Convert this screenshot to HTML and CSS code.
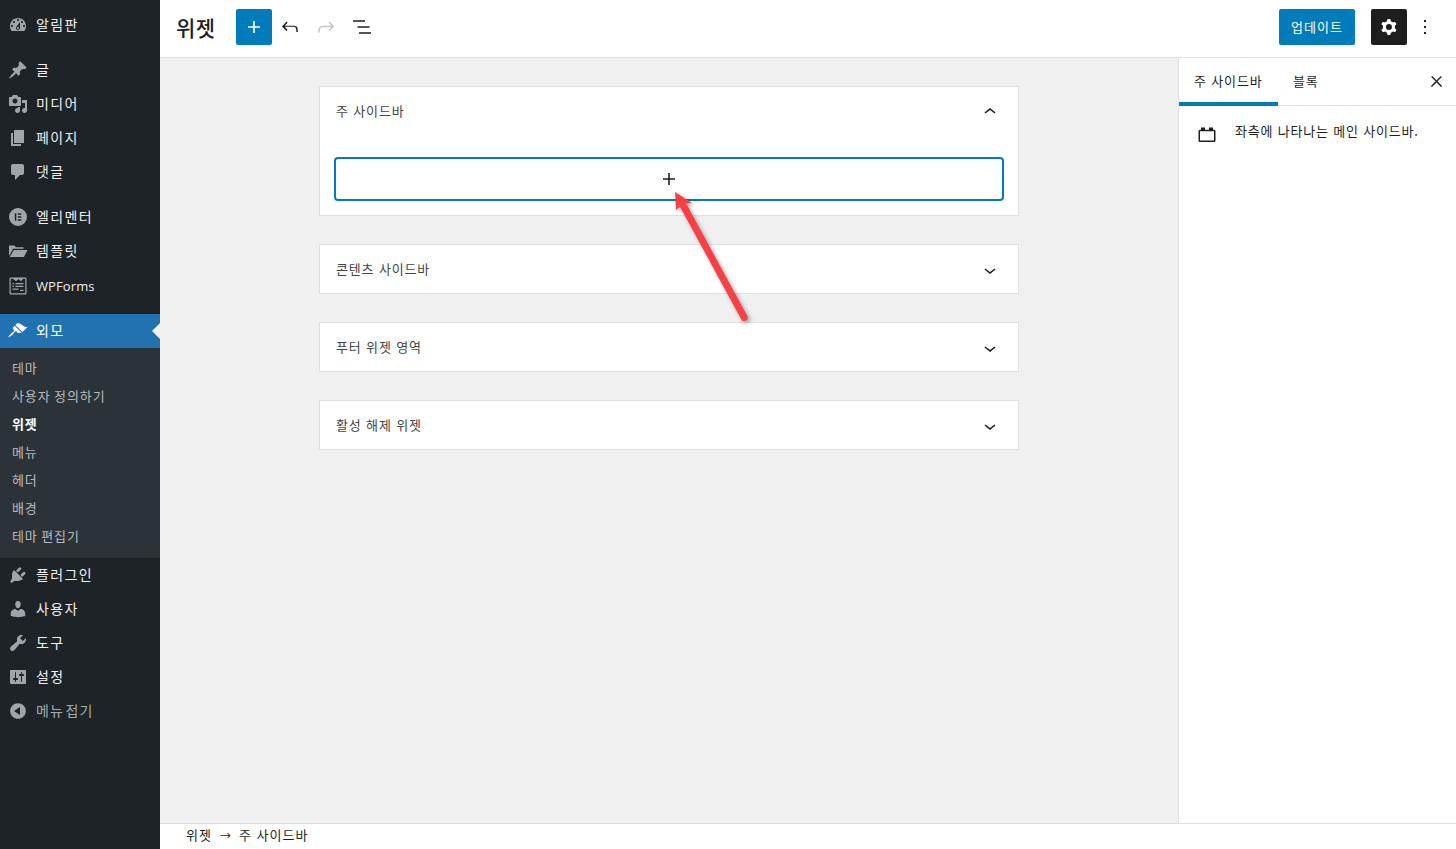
FILE: index.html
```html
<!DOCTYPE html>
<html lang="ko">
<head>
<meta charset="utf-8">
<title>위젯</title>
<link rel="stylesheet" href="styles.css">
</head>
<body>
<div class="app">
  <nav class="adminmenu">
    <a class="mi"><svg class="mi-ic" viewBox="0 0 20 20"><path d="M3.760 16h12.480c1.100-1.370 1.760-3.110 1.760-5 0-4.420-3.580-8-8-8s-8 3.580-8 8c0 1.890.66 3.630 1.760 5zM10 4c.55 0 1 .45 1 1s-.45 1-1 1-1-.45-1-1 .45-1 1-1zM6 6c.55 0 1 .45 1 1s-.45 1-1 1-1-.45-1-1 .45-1 1-1zm8 0c.55 0 1 .45 1 1s-.45 1-1 1-1-.45-1-1 .45-1 1-1zm-5.370 5.550L12 7v6c0 1.100-.9 2-2 2s-2-.9-2-2c0-.57.24-1.080.63-1.450zM4 10c.55 0 1 .45 1 1s-.45 1-1 1-1-.45-1-1 .45-1 1-1zm12 0c.55 0 1 .45 1 1s-.45 1-1 1-1-.45-1-1 .45-1 1-1zm-5 3c0-.55-.45-1-1-1s-1 .45-1 1 .45 1 1 1 1-.45 1-1z"/></svg><span>알림판</span></a>
    <a class="mi sep"><svg class="mi-ic" viewBox="0 0 20 20"><path d="M10.440 3.020l1.820-1.820 6.360 6.350-1.830 1.820c-1.050-.68-2.480-.57-3.410.36l-.75.75c-.92.93-1.040 2.350-.35 3.410l-1.830 1.820-2.410-2.410-2.800 2.790c-.42.42-3.380 2.710-3.800 2.290s1.860-3.390 2.280-3.810l2.790-2.790L4.100 9.360l1.830-1.820c1.050.69 2.480.57 3.400-.36l.75-.75c.93-.92 1.050-2.350.36-3.410z"/></svg><span>글</span></a>
    <a class="mi"><svg class="mi-ic" viewBox="0 0 20 20"><path d="M13 11V4c0-.55-.45-1-1-1h-1.670L9 1H5L3.670 3H2c-.55 0-1 .45-1 1v7c0 .55.45 1 1 1h10c.55 0 1-.45 1-1zM7 4.500c1.380 0 2.500 1.120 2.500 2.500S8.380 9.500 7 9.500 4.500 8.380 4.500 7 5.620 4.500 7 4.500zM14 6h5v10.500c0 1.380-1.120 2.500-2.500 2.500S14 17.880 14 16.500s1.120-2.500 2.500-2.500c.17 0 .34.02.5.050V9h-3V6zm-4 8.050V13h2v3.500c0 1.380-1.120 2.500-2.500 2.500S7 17.880 7 16.500 8.120 14 9.500 14c.17 0 .34.02.5.050z"/></svg><span>미디어</span></a>
    <a class="mi"><svg class="mi-ic" viewBox="0 0 20 20"><path d="M6 15V2h10v13H6zm-1 1h8v2H3V5h2v11z"/></svg><span>페이지</span></a>
    <a class="mi"><svg class="mi-ic" viewBox="0 0 20 20"><path d="M5 2h9c1.100 0 2 .9 2 2v7c0 1.100-.9 2-2 2h-2l-5 5v-5H5c-1.100 0-2-.9-2-2V4c0-1.100.9-2 2-2z"/></svg><span>댓글</span></a>
    <a class="mi sep"><svg class="mi-ic" viewBox="0 0 20 20"><path fill-rule="evenodd" d="M10 1a9 9 0 1 1 0 18 9 9 0 0 1 0-18zM6.800 6.200v7.600h1.500V6.200zm3 0v1.500h3.500V6.200zm0 3v1.500h3.500V9.200zm0 3.100v1.500h3.500v-1.500z"/></svg><span>엘리멘터</span></a>
    <a class="mi"><svg class="mi-ic" viewBox="0 0 20 20"><path d="M1 4.500h5.500l1.500 1.700h7.500v1.600H5L1.600 14.500 1 14z"/><path d="M5.800 9H19.500l-3.600 7H1.800z"/></svg><span>템플릿</span></a>
    <a class="mi wp"><svg class="mi-ic" viewBox="0 0 20 20"><path fill-rule="evenodd" d="M2.500 1.500h15a1 1 0 0 1 1 1v15a1 1 0 0 1-1 1h-15a1 1 0 0 1-1-1v-15a1 1 0 0 1 1-1zm.2 1.200v14.600h14.600V2.700h-2.200L13 5.200 10.500 3 8 5.200 5 2.700zM4.500 7h1.600v1.300H4.500zm3 0h8v1.300h-8zm-3 2.700h1.600V11H4.500zm3 0h8V11h-8zm-3 2.700h6v1.300h-6zm7.500 1.300h3.500V15H12z"/></svg><span class="latin">WPForms</span></a>
    <div class="group sep">
      <a class="mi active"><svg class="mi-ic" viewBox="0 0 20 20"><path d="M14.480 11.060L7.410 3.990l1.500-1.500c.5-.56 2.300-.47 3.510.32 1.210.8 1.430 1.280 2.910 2.100 1.180.64 2.450 1.260 4.450.85zm-.71.71L6.700 4.700 4.930 6.470c-.39.39-.39 1.020 0 1.410l1.060 1.060c.39.39.39 1.030 0 1.420-.6.6-1.430 1.110-2.210 1.690-.35.26-.7.53-1.010.84C1.430 13.730 0 16.500 0 16.500s3.150-1.280 4.510-2.660c.31-.31.58-.66.84-1.010.58-.78 1.090-1.610 1.690-2.210.39-.39 1.030-.39 1.420 0l1.060 1.060c.39.39 1.020.39 1.410 0z"/></svg><span>외모</span></a>
      <div class="submenu">
        <a class="si">테마</a>
        <a class="si">사용자 정의하기</a>
        <a class="si current">위젯</a>
        <a class="si">메뉴</a>
        <a class="si">헤더</a>
        <a class="si">배경</a>
        <a class="si">테마 편집기</a>
      </div>
    </div>
    <a class="mi"><svg class="mi-ic" viewBox="0 0 20 20"><path d="M13.110 4.360L9.870 7.600 8 5.730l3.240-3.240c.35-.34 1.050-.2 1.560.32.520.51.660 1.210.31 1.550zm-8 1.770l.91-1.120 9.010 9.010-1.190.84c-.71.710-2.630 1.160-3.820 1.160H6.140L4.900 17.260c-.59.590-1.540.59-2.120 0-.59-.58-.59-1.530 0-2.120l1.240-1.240v-3.880c0-1.130.4-3.120 1.090-3.890zm7.260 3.970l3.240-3.240c.34-.35 1.040-.21 1.550.31.520.510.660 1.210.31 1.550l-3.240 3.250z"/></svg><span>플러그인</span></a>
    <a class="mi"><svg class="mi-ic" viewBox="0 0 20 20"><path d="M10 9.250c-2.270 0-2.730-3.440-2.730-3.440C7 4.020 7.820 2 9.970 2c2.160 0 2.980 2.020 2.710 3.810 0 0-.41 3.440-2.680 3.440zm0 2.570L12.720 10c2.390 0 4.520 2.330 4.520 4.530v2.490s-3.650 1.130-7.240 1.130c-3.650 0-7.240-1.130-7.240-1.130v-2.490c0-2.250 1.940-4.480 4.470-4.480z"/></svg><span>사용자</span></a>
    <a class="mi"><svg class="mi-ic" viewBox="0 0 20 20"><path d="M16.680 9.770c-1.340 1.340-3.300 1.670-4.950.99l-5.410 6.520c-.99.99-2.590.99-3.570 0-.99-.98-.99-2.580 0-3.570l6.520-5.420c-.68-1.650-.35-3.610.99-4.950 1.280-1.280 3.120-1.620 4.720-1.060l-2.890 2.890 2.820 2.820 2.860-2.870c.53 1.580.18 3.390-1.090 4.650z"/></svg><span>도구</span></a>
    <a class="mi"><svg class="mi-ic" viewBox="0 0 20 20"><path d="M18 16V4c0-.55-.45-1-1-1H3c-.55 0-1 .45-1 1v12c0 .55.45 1 1 1h14c.55 0 1-.45 1-1zM8 11h1c.55 0 1 .45 1 1s-.45 1-1 1H8v1.500c0 .28-.22.5-.5.5s-.5-.22-.5-.5V13H6c-.55 0-1-.45-1-1s.45-1 1-1h1V5.500c0-.28.22-.5.5-.5s.5.22.5.5V11zm5-2h-1c-.55 0-1-.45-1-1s.45-1 1-1h1V5.500c0-.28.22-.5.5-.5s.5.22.5.5V7h1c.55 0 1 .45 1 1s-.45 1-1 1h-1v5.500c0 .28-.22.5-.5.5s-.5-.22-.5-.5V9z"/></svg><span>설정</span></a>
    <a class="mi collapse"><svg class="mi-ic" viewBox="0 0 20 20"><path d="M10 2.160c4.330 0 7.840 3.510 7.840 7.840S14.330 17.840 10 17.840 2.160 14.330 2.160 10 5.670 2.160 10 2.160zm2 11.840V6l-6 4z"/></svg><span>메뉴 접기</span></a>
  </nav>

  <div class="editor">
    <header class="topbar">
      <h1 class="title">위젯</h1>
      <button class="inserter"><svg class="ic24" viewBox="0 0 24 24"><path d="M18 11.200h-5.200V6h-1.600v5.200H6v1.600h5.200V18h1.600v-5.200H18z"/></svg></button>
      <button class="tool"><svg class="ic24" viewBox="0 0 24 24"><path d="M18.300 11.700c-.6-.6-1.400-.9-2.300-.9H6.700l2.900-3.300-1.100-1-4.500 5L8.500 16l1.100-1-2.900-3.300H16c.5 0 .9.2 1.300.5 1 1 1 3.400 1 4.500v.3h1.500v-.2c0-1.500 0-4.300-1.500-5.700z"/></svg></button>
      <button class="tool disabled"><svg class="ic24" viewBox="0 0 24 24"><path d="M15.600 6.500l-1.100 1 2.900 3.300H8c-.9 0-1.700.3-2.300.9-1.400 1.500-1.400 4.200-1.400 5.600v.2h1.500v-.3c0-1.100 0-3.500 1-4.500.3-.3.7-.5 1.300-.5h9.200L14.500 15l1.100 1.100 4.600-4.600-4.600-5z"/></svg></button>
      <button class="tool"><svg class="ic24" viewBox="0 0 24 24"><path d="M3 5.200h12v1.500H3zM7.500 11.200h12v1.500h-12zM9 17.200h12v1.500H9z"/></svg></button>
      <div class="spacer"></div>
      <button class="update">업데이트</button>
      <button class="settings"><svg class="ic24" viewBox="0 0 24 24"><path fill-rule="evenodd" d="M10.289 4.836A1 1 0 0 1 11.275 4h1.306a1 1 0 0 1 .987.836l.244 1.466c.787.26 1.503.679 2.108 1.218l1.393-.522a1 1 0 0 1 1.216.437l.653 1.130a1 1 0 0 1-.23 1.273l-1.148.944a6.025 6.025 0 0 1 0 2.435l1.149.946a1 1 0 0 1 .23 1.272l-.653 1.130a1 1 0 0 1-1.216.437l-1.394-.522c-.605.54-1.320.958-2.108 1.218l-.244 1.466a1 1 0 0 1-.987.836h-1.306a1 1 0 0 1-.986-.836l-.244-1.466a5.995 5.995 0 0 1-2.108-1.218l-1.394.522a1 1 0 0 1-1.217-.436l-.653-1.131a1 1 0 0 1 .23-1.272l1.149-.946a6.026 6.026 0 0 1 0-2.435l-1.148-.944a1 1 0 0 1-.23-1.272l.653-1.131a1 1 0 0 1 1.217-.437l1.393.522a5.994 5.994 0 0 1 2.108-1.218l.244-1.466zM14.929 12a3 3 0 1 1-6 0 3 3 0 0 1 6 0z"/></svg></button>
      <button class="more"><svg class="ic24" viewBox="0 0 24 24"><path d="M13 19h-2v-2h2v2zm0-6h-2v-2h2v2zm0-6h-2V5h2v2z"/></svg></button>
    </header>

    <div class="workspace">
      <main class="canvas">
        <section class="card">
          <div class="card-head"><span>주 사이드바</span><svg class="ic24" viewBox="0 0 24 24"><path d="M6.500 12.400L12 8l5.500 4.400-.9 1.200L12 10l-4.500 3.600-1-1.200z"/></svg></div>
          <div class="card-body">
            <div class="appender"><svg class="ic24" viewBox="0 0 24 24"><path d="M18 11.200h-5.200V6h-1.600v5.200H6v1.600h5.200V18h1.600v-5.200H18z"/></svg></div>
          </div>
        </section>
        <section class="card">
          <div class="card-head"><span>콘텐츠 사이드바</span><svg class="ic24" viewBox="0 0 24 24"><path d="M17.500 11.600L12 16l-5.500-4.400.9-1.200L12 14l4.500-3.600 1 1.200z"/></svg></div>
        </section>
        <section class="card">
          <div class="card-head"><span>푸터 위젯 영역</span><svg class="ic24" viewBox="0 0 24 24"><path d="M17.500 11.600L12 16l-5.500-4.400.9-1.200L12 14l4.500-3.600 1 1.200z"/></svg></div>
        </section>
        <section class="card">
          <div class="card-head"><span>활성 해제 위젯</span><svg class="ic24" viewBox="0 0 24 24"><path d="M17.500 11.600L12 16l-5.500-4.400.9-1.200L12 14l4.500-3.600 1 1.200z"/></svg></div>
        </section>
      </main>
      <aside class="panel">
        <div class="tabs">
          <span class="tab on">주 사이드바</span>
          <span class="tab">블록</span>
          <svg class="close" viewBox="0 0 24 24"><path d="M13 11.800l6.100-6.300-1-1-6.100 6.200-6.100-6.200-1 1 6.100 6.300-6.500 6.700 1 1 6.500-6.600 6.500 6.600 1-1z"/></svg>
        </div>
        <div class="desc">
          <svg class="ic24" viewBox="0 0 24 24"><path d="M6 5.500h4v2.200h4V5.500h4v2.200h1a1.500 1.500 0 0 1 1.500 1.500v9.300a1.500 1.500 0 0 1-1.500 1.500H5a1.500 1.500 0 0 1-1.500-1.500V9.200A1.500 1.500 0 0 1 5 7.700h1zM5 9.200v9.300h14V9.200z"/></svg>
          <p>좌측에 나타나는 메인 사이드바.</p>
        </div>
      </aside>
    </div>

    <footer class="crumbs"><span>위젯</span><span class="arr">→</span><span>주 사이드바</span></footer>
  </div>

  <svg class="annot" viewBox="0 0 100 150"><polygon points="15,12 32,23 26,23.300 88,137.300 87,140 85,141 82,140.700 20,26.700 16,30"/></svg>
</div>
</body>
</html>
```

FILE: styles.css
```css
* { box-sizing: border-box; }
html, body { margin: 0; padding: 0; height: 100%; overflow: hidden; }
body {
  font-family: "Noto Sans CJK KR", "Noto Sans", sans-serif;
  font-size: 13px;
  color: #1e1e1e;
  background: #fff;
}
button { font: inherit; border: 0; padding: 0; margin: 0; background: none; cursor: pointer; }
svg { display: block; fill: currentColor; }

.app { position: relative; display: flex; height: 100%; }

/* admin menu */
.adminmenu { width: 160px; flex: none; background: #1d2327; padding-top: 8px; }
.mi {
  display: flex; align-items: center; gap: 8px;
  height: 34px; padding-left: 8px;
  color: #f0f0f1; font-size: 14px; letter-spacing: 1.4px;
}
.mi span { padding-bottom: 2px; }
.mi.sep, .group.sep { margin-top: 11px; }
.mi.wp { margin-top: 1px; }
.mi-ic { width: 20px; height: 20px; flex: none; color: #a0a5aa; }
.mi .latin { font-family: "Open Sans", sans-serif; font-size: 13px; letter-spacing: .1px; font-weight: 500; padding-bottom: 0; }
.mi.active { position: relative; background: #2271b1; color: #fff; }
.mi.active .mi-ic { color: #fff; }
.mi.active::after {
  content: ""; position: absolute; right: 0; top: 50%; margin-top: -8px;
  border: 8px solid transparent; border-right-color: #f0f0f1; border-left-width: 0;
}
.submenu { background: #2c3338; padding: 7px 0; }
.si {
  display: flex; align-items: center; height: 28px; padding: 0 0 4px 12px;
  color: rgba(240, 246, 252, .7); font-size: 13px; letter-spacing: .9px; word-spacing: -1px;
}
.si.current { color: #fff; font-weight: 700; }
.mi.collapse { color: #a7aaad; letter-spacing: 1.1px; word-spacing: -3.5px; }

/* editor */
.editor { flex: 1; min-width: 0; display: flex; flex-direction: column; }
.topbar {
  height: 58px; flex: none; display: flex; align-items: center;
  border-bottom: 1px solid #e0e0e0; background: #fff;
  padding: 0 19px 3px 16px;
}
.title { margin: 0 20px 0 0; width: 40px; font-size: 21px; font-weight: 500; letter-spacing: .5px; line-height: 1; white-space: nowrap; }
.ic24 { width: 24px; height: 24px; flex: none; }
.inserter {
  width: 36px; height: 36px; border-radius: 2px; background: #007cba; color: #fff;
  display: flex; align-items: center; justify-content: center;
}
.tool { width: 36px; height: 36px; display: flex; align-items: center; justify-content: center; color: #1e1e1e; }
.tool.disabled { color: #c6c6c6; }
.spacer { flex: 1; }
.update {
  width: 76px; height: 36px; border-radius: 2px; background: #007cba; color: #fff;
  font-size: 13px; letter-spacing: 1px; padding-bottom: 2px;
}
.settings {
  width: 36px; height: 36px; margin-left: 16px; border-radius: 2px; background: #1e1e1e; color: #fff;
  display: flex; align-items: center; justify-content: center;
}
.more { width: 24px; height: 36px; margin-left: 6px; display: flex; align-items: center; justify-content: center; color: #1e1e1e; }

.workspace { flex: 1; min-height: 0; display: flex; }
.canvas {
  flex: 1; min-width: 0; background: #f0f0f0;
  padding-top: 28px; display: flex; flex-direction: column; align-items: center; gap: 28px;
}
.card { width: 700px; background: #fff; border: 1px solid #e0e0e0; }
.card-head {
  height: 48px; display: flex; align-items: center; justify-content: space-between;
  padding: 0 16px; color: #444; font-size: 13px; letter-spacing: .85px;
}
.card-head span { padding-bottom: 2px; }
.card-head svg { color: #1e1e1e; margin-top: 2px; }
.card-body { padding: 22px 14px 14px; }
.appender {
  height: 44px; border: 2px solid #007cba; border-radius: 4px;
  display: flex; align-items: center; justify-content: center; color: #1e1e1e;
}

.panel { width: 278px; flex: none; background: #fff; border-left: 1px solid #e0e0e0; }
.tabs {
  height: 48px; display: flex; align-items: stretch;
  border-bottom: 1px solid #e0e0e0;
}
.tab {
  display: flex; align-items: center; padding: 0 15px; font-size: 13px; letter-spacing: .85px;
  border-bottom: 4px solid transparent; margin-bottom: -1px; color: #1e1e1e;
}
.tab.on { width: 99px; border-bottom-color: #007cba; }
.close {
  width: 17px; height: 17px; margin: auto 11px auto auto; flex: none;
  stroke: currentColor; stroke-width: .7;
}
.desc { display: flex; align-items: flex-start; gap: 16px; padding: 16px 16px 0 16px; }
.desc p { margin: 0; font-size: 13px; line-height: 18px; color: #1e1e1e; letter-spacing: .8px; white-space: nowrap; }

.crumbs {
  height: 26px; flex: none; display: flex; align-items: center; gap: 8px;
  background: #fff; border-top: 1px solid #e0e0e0; padding: 0 0 4px 26px;
  font-size: 13px; color: #1e1e1e; letter-spacing: 1px;
}
.arr { font-size: 11px; letter-spacing: 0; }

/* hand-drawn annotation arrow lying over the page */
.annot {
  position: absolute; left: 660px; top: 180px; width: 100px; height: 150px;
  fill: #fb3f47; filter: drop-shadow(2px 2px 2px rgba(0, 0, 0, .35));
}
```
